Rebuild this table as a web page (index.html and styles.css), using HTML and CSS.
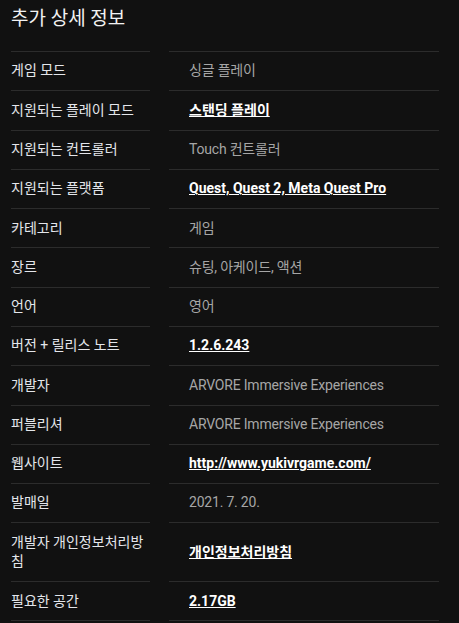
FILE: index.html
```html
<!DOCTYPE html>
<html lang="ko">
<head>
    <meta charset="UTF-8">
    <meta name="viewport" content="width=device-width, initial-scale=1.0">
    <title>추가 상세 정보</title>
    <link rel="stylesheet" href="styles.css">
</head>
<body>
    <h2>추가 상세 정보</h2>

    <div class="details">
        <div class="row">
            <div class="label">게임 모드</div>
            <div class="value">싱글 플레이</div>
        </div>
        <div class="row">
            <div class="label">지원되는 플레이 모드</div>
            <div class="value"><a href="#">스탠딩 플레이</a></div>
        </div>
        <div class="row">
            <div class="label">지원되는 컨트롤러</div>
            <div class="value">Touch 컨트롤러</div>
        </div>
        <div class="row">
            <div class="label">지원되는 플랫폼</div>
            <div class="value"><a href="#">Quest, Quest 2, Meta Quest Pro</a></div>
        </div>
        <div class="row">
            <div class="label">카테고리</div>
            <div class="value">게임</div>
        </div>
        <div class="row">
            <div class="label">장르</div>
            <div class="value">슈팅, 아케이드, 액션</div>
        </div>
        <div class="row">
            <div class="label">언어</div>
            <div class="value">영어</div>
        </div>
        <div class="row">
            <div class="label">버전 + 릴리스 노트</div>
            <div class="value"><a href="#">1.2.6.243</a></div>
        </div>
        <div class="row">
            <div class="label">개발자</div>
            <div class="value">ARVORE Immersive Experiences</div>
        </div>
        <div class="row">
            <div class="label">퍼블리셔</div>
            <div class="value">ARVORE Immersive Experiences</div>
        </div>
        <div class="row">
            <div class="label">웹사이트</div>
            <div class="value"><a href="#">http://www.yukivrgame.com/</a></div>
        </div>
        <div class="row">
            <div class="label">발매일</div>
            <div class="value">2021. 7. 20.</div>
        </div>
        <div class="row">
            <div class="label">개발자 개인정보처리방침</div>
            <div class="value"><a href="#">개인정보처리방침</a></div>
        </div>
        <div class="row">
            <div class="label">필요한 공간</div>
            <div class="value"><a href="#">2.17GB</a></div>
        </div>
    </div>
</body>
</html>
```

FILE: styles.css
```css
body {
    margin: 0;
    padding: 4px 20px 0 11px;
    background-color: #111111;
    color: #e4e6eb;
    font-family: Roboto, "Noto Sans CJK KR", sans-serif;
}

h2 {
    margin: 0 0 17px;
    font-size: 19px;
    font-weight: 400;
    line-height: 30px;
    color: #f2f2f2;
}

.details {
    font-size: 14px;
    line-height: 19.5px;
}

.row {
    display: grid;
    grid-template-columns: 139px 1fr;
    column-gap: 19px;
}

.label,
.value {
    display: flex;
    align-items: center;
    padding: 9.4px 0;
    border-top: 1px solid #2c2c2c;
}

.row:last-child .label,
.row:last-child .value {
    border-bottom: 1px solid #2c2c2c;
}

.value {
    padding-left: 20px;
    color: #a6a6a6;
    letter-spacing: -0.2px;
}

.value a {
    color: #ffffff;
    font-weight: 700;
    letter-spacing: 0;
    text-decoration: underline;
}
```
